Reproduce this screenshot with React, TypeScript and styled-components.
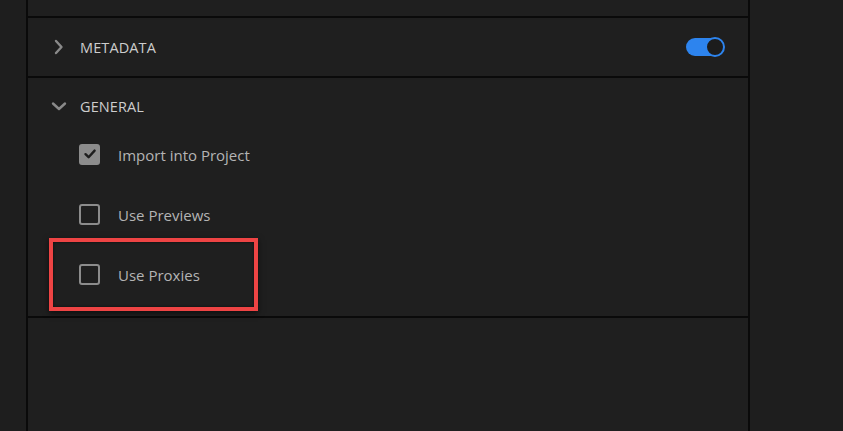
import React from "react";
import styled, { createGlobalStyle } from "styled-components";

const Global = createGlobalStyle`
  html, body { margin: 0; padding: 0; background: #1e1e1e; }
  body { font-family: "Open Sans", "Liberation Sans", sans-serif; overflow: hidden; }
  #root { height: 431px; }
`;

const Page = styled.div`
  display: flex;
  height: 431px;
  background: #1e1e1e;
`;

const Gutter = styled.div<{ $w: number }>`
  width: ${(p) => p.$w}px;
  flex-shrink: 0;
`;

const Panel = styled.div`
  width: 720px;
  flex-shrink: 0;
  border-left: 2px solid #0a0a0a;
  border-right: 2px solid #0a0a0a;
  background: #1f1f1f;
  display: flex;
  flex-direction: column;
`;

const Section = styled.div<{ $h?: number }>`
  border-bottom: 2px solid #0a0a0a;
  ${(p) => (p.$h !== undefined ? `height: ${p.$h}px;` : "")}
  display: flex;
  flex-direction: column;
`;

const Header = styled.div<{ $h: number }>`
  height: ${(p) => p.$h}px;
  display: flex;
  align-items: center;
  padding: 0 24px 0 22px;
`;

const ChevronBox = styled.span`
  width: 18px;
  height: 18px;
  display: flex;
  align-items: center;
  justify-content: center;
  margin-right: 12px;
`;

const Title = styled.span`
  font-size: 14.5px;
  color: #cdcdcd;
  letter-spacing: 0.1px;
  flex: 1;
`;

const Toggle = styled.span`
  position: relative;
  width: 38px;
  height: 18px;
  border-radius: 9px;
  background: #2d84ee;
  display: inline-block;
`;

const Knob = styled.span`
  position: absolute;
  right: -1px;
  top: -1px;
  width: 16px;
  height: 16px;
  border-radius: 50%;
  background: #1c1c1c;
  border: 2px solid #2d84ee;
`;

const List = styled.div`
  display: flex;
  flex-direction: column;
  gap: 20px;
  padding-bottom: 22px;
`;

const Row = styled.div`
  position: relative;
  height: 40px;
  display: flex;
  align-items: center;
  padding-left: 51px;
`;

const Box = styled.span<{ $checked: boolean }>`
  width: 21px;
  height: 21px;
  box-sizing: border-box;
  border-radius: 3px;
  border: 2.5px solid #8c8c8c;
  background: ${(p) => (p.$checked ? "#8c8c8c" : "transparent")};
  display: flex;
  align-items: center;
  justify-content: center;
  margin-right: 18px;
`;

const Label = styled.span`
  font-size: 15px;
  color: #b4b4b4;
  margin-top: 2px;
`;

const Highlight = styled.span`
  position: absolute;
  left: 21px;
  top: -16px;
  width: 209px;
  height: 73px;
  box-sizing: border-box;
  border: 4px solid #ee4444;
  box-shadow: 0 2px 6px rgba(0, 0, 0, 0.6), inset 0 0 3px rgba(0, 0, 0, 0.6);
  pointer-events: none;
`;

const Fill = styled.div`
  flex: 1;
`;

const Chevron = ({ open }: { open: boolean }) => (
  <svg width="16" height="16" viewBox="0 0 16 16" fill="none">
    {open ? (
      <path d="M2 5.5 L8 11 L14 5.5" stroke="#8a8a8a" strokeWidth="2.4" strokeLinecap="round" strokeLinejoin="round" />
    ) : (
      <path d="M5 2 L10.5 8 L5 14" stroke="#8a8a8a" strokeWidth="2.4" strokeLinecap="round" strokeLinejoin="round" />
    )}
  </svg>
);

const Check = () => (
  <svg width="14" height="14" viewBox="0 0 14 14" fill="none">
    <path d="M2.5 7.2 L5.6 10.2 L11.6 3.6" stroke="#1e1e1e" strokeWidth="2.4" strokeLinecap="round" strokeLinejoin="round" />
  </svg>
);

const items = [
  { label: "Import into Project", checked: true, highlight: false },
  { label: "Use Previews", checked: false, highlight: false },
  { label: "Use Proxies", checked: false, highlight: true },
];

export default function App() {
  return (
    <Page>
      <Global />
      <Gutter $w={26} />
      <Panel>
        <Section $h={16} />
        <Section>
          <Header $h={58}>
            <ChevronBox>
              <Chevron open={false} />
            </ChevronBox>
            <Title>METADATA</Title>
            <Toggle>
              <Knob />
            </Toggle>
          </Header>
        </Section>
        <Section>
          <Header $h={56}>
            <ChevronBox>
              <Chevron open={true} />
            </ChevronBox>
            <Title>GENERAL</Title>
          </Header>
          <List>
            {items.map((it) => (
              <Row key={it.label}>
                <Box $checked={it.checked}>{it.checked && <Check />}</Box>
                <Label>{it.label}</Label>
                {it.highlight && <Highlight />}
              </Row>
            ))}
          </List>
        </Section>
        <Fill />
      </Panel>
      <Gutter $w={93} />
    </Page>
  );
}
